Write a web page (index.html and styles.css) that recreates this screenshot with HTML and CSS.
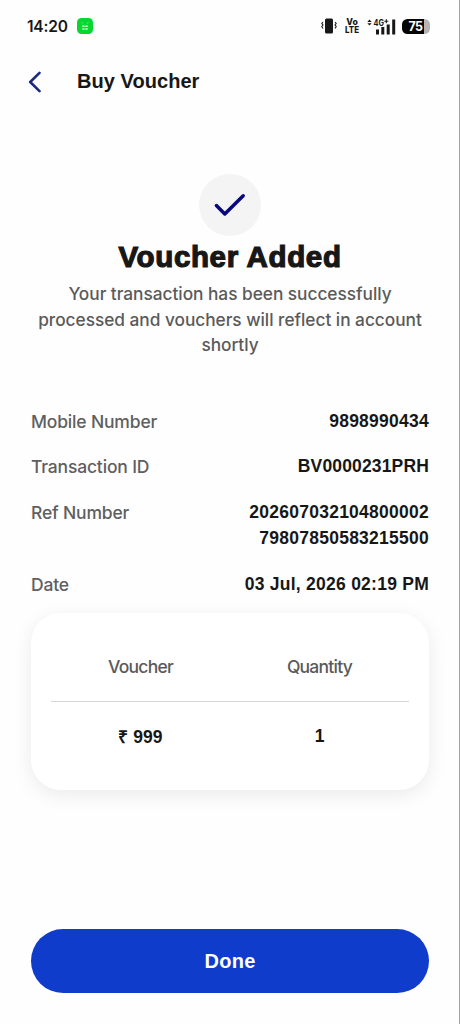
FILE: index.html
```html
<!DOCTYPE html>
<html lang="en">
<head>
<meta charset="utf-8">
<meta name="viewport" content="width=device-width, initial-scale=1">
<title>Buy Voucher</title>
<link rel="stylesheet" href="styles.css">
</head>
<body>
<div class="screen">
  <div class="status-bar">
    <span class="clock">14:20</span>
    <svg class="app-badge" width="16" height="16" viewBox="0 0 16 16">
      <rect width="16" height="16" rx="4.5" fill="#08d72e"/>
      <path d="M4.500 4.500l1.500.8M11.500 4.500l-1.500.8" stroke="#5dec70" stroke-width="1"/>
      <path d="M5.300 8.300h5.400M5.300 11h5.400" stroke="#c8ffd0" stroke-width="1.600" stroke-dasharray="2.400 .6"/>
    </svg>
    <div class="indicators">
      <svg class="vibrate" width="16" height="16" viewBox="0 0 16 16">
        <rect x="4" y="0.500" width="8" height="15" rx="1.500" fill="#171717"/>
        <path d="M2 4L.8 5.500 2 7 .8 8.500 2 10.500M14 4L15.200 5.500 14 7 15.200 8.500 14 10.500" fill="none" stroke="#171717" stroke-width="1.100"/>
      </svg>
      <svg class="volte" width="16" height="22" viewBox="0 0 16 22">
        <text x="2.300" y="9.500" textLength="11.500" lengthAdjust="spacingAndGlyphs">Vo</text>
        <text x="1" y="18.200" textLength="14" lengthAdjust="spacingAndGlyphs">LTE</text>
      </svg>
      <svg class="signal" width="29" height="17" viewBox="0 0 29 17">
        <path d="M.3 4L2.500 1.600 4.700 4zM.3 5.200h4.400L2.500 7.600z" fill="#171717"/>
        <text class="network" x="6.500" y="7.500" textLength="10.500" lengthAdjust="spacingAndGlyphs">4G</text>
        <path d="M17.300 3.300h4M19.300 1.300v4" stroke="#171717" stroke-width="1.100"/>
        <path d="M9 11.500h3v5H9zM14.300 9h3v7.500h-3zM19.700 6.500h3v10h-3zM25.200 1.500h3v15h-3z" fill="#171717"/>
      </svg>
      <span class="battery">75</span>
    </div>
  </div>
  <header class="app-bar">
    <svg class="back" width="14" height="22" viewBox="0 0 14 22">
      <path d="M11.500 1.800L2.200 11l9.300 9.200" fill="none" stroke="#1b2b7c" stroke-width="2.600" stroke-linecap="round" stroke-linejoin="round"/>
    </svg>
    <h1 class="app-title">Buy Voucher</h1>
  </header>
  <main class="content">
    <section class="result">
      <div class="check">
        <svg width="34" height="26" viewBox="0 0 34 26">
          <path d="M3.400 13.600L11.800 22 30.200 3.800" fill="none" stroke="#07077f" stroke-width="3.500" stroke-linecap="round" stroke-linejoin="round"/>
        </svg>
      </div>
      <h2 class="result-title">Voucher Added</h2>
      <p class="result-text">Your transaction has been successfully<br>processed and vouchers will reflect in account<br>shortly</p>
    </section>
    <dl class="details">
      <div class="row"><dt>Mobile Number</dt><dd>9898990434</dd></div>
      <div class="row"><dt>Transaction ID</dt><dd class="code">BV0000231PRH</dd></div>
      <div class="row"><dt>Ref Number</dt><dd>202607032104800002<br>79807850583215500</dd></div>
      <div class="row"><dt>Date</dt><dd>03 Jul, 2026 02:19 PM</dd></div>
    </dl>
    <section class="card">
      <div class="card-row card-head"><span>Voucher</span><span>Quantity</span></div>
      <div class="card-row card-body"><span>₹ 999</span><span>1</span></div>
    </section>
  </main>
  <button class="done" type="button">Done</button>
</div>
</body>
</html>
```
FILE: styles.css
```css
* { box-sizing: border-box; }
body { margin: 0; background: #fefefe; font-family: Inter, "Liberation Sans", sans-serif; color: #171717; }
h1, h2, p, dl, dd { margin: 0; }
svg { display: block; }
.screen { height: 1024px; display: flex; flex-direction: column; border-right: 1px solid #a3a3a3; overflow: hidden; }
.status-bar { height: 52px; display: flex; align-items: center; padding: 0 29px 0 27px; flex: none; }
.clock { font-size: 15.500px; font-weight: 600; width: 50px; letter-spacing: -0.200px; }
.indicators { margin-left: auto; display: flex; align-items: center; }
.volte { margin-left: 7px; font-size: 9px; font-weight: 800; fill: #171717; overflow: visible; }
.signal { margin-left: 7px; }
.network { font-size: 8.500px; font-weight: 700; fill: #171717; }
.battery { margin-left: 6px; width: 28px; height: 15px; border-radius: 5.500px; background: linear-gradient(90deg, #050505 78%, #b5b5b5 78%); color: #fff; font-size: 12.500px; line-height: 15px; font-weight: 700; text-align: center; letter-spacing: -0.500px; padding-right: 1px; }
.app-bar { height: 59px; display: flex; align-items: center; padding-left: 28px; gap: 35px; flex: none; }
.app-title { font: 700 20px/23px "Liberation Sans", sans-serif; letter-spacing: 0.050px; margin-top: -1px; }
.content { padding: 63px 30px 0 31px; flex: 1; }
.result { display: flex; flex-direction: column; align-items: center; text-align: center; }
.check { width: 62px; height: 62px; margin-left: -1px; border-radius: 50%; background: #f4f4f4; display: flex; align-items: center; justify-content: center; }
.result-title { font: 700 29.500px/36px "Liberation Sans", sans-serif; margin-top: 3px; letter-spacing: 0.650px; -webkit-text-stroke: 1.200px #171717; white-space: nowrap; }
.result-text { font-size: 17.300px; line-height: 25.500px; font-weight: 450; letter-spacing: -0.030px; color: #5a5a5a; margin-top: 6px; white-space: nowrap; }
.details { display: flex; flex-direction: column; gap: 20px; margin-top: 51px; font-size: 17.500px; line-height: 25.800px; }
.row { display: flex; justify-content: space-between; white-space: nowrap; }
dt { color: #5f5f5f; font-weight: 450; letter-spacing: -0.170px; }
dd { font-family: "Liberation Sans", sans-serif; font-weight: 700; letter-spacing: 0.250px; text-align: right; }
.code { letter-spacing: 0.150px; }
.card { margin-top: 16px; height: 177px; border-radius: 30px; background: #fff; padding: 20px 20px 0; box-shadow: 0 5px 20px rgba(0, 0, 0, .08); font-size: 17.500px; }
.card-row { display: grid; grid-template-columns: 1fr 1fr; text-align: center; height: 68px; align-items: center; }
.card-head { height: 69px; padding-bottom: 2px; border-bottom: 1px solid #d8d8d8; color: #5a5a5a; font-weight: 450; letter-spacing: -0.750px; }
.card-body { font-family: "Liberation Sans", sans-serif; font-weight: 700; }
.done { flex: none; height: 64px; margin: 0 30px 31px 31px; border: 0; border-radius: 32px; background: #0f3cca; color: #fff; font: 700 20px "Liberation Sans", sans-serif; letter-spacing: 0.300px; }
```
